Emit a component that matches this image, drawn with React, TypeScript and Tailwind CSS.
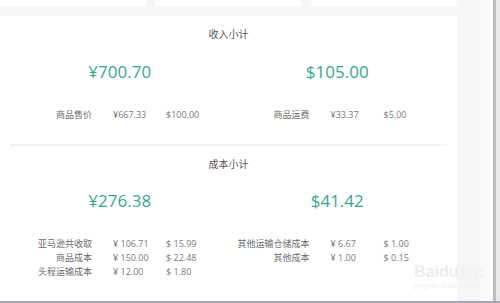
const font = { fontFamily: '"Open Sans", "Noto Sans CJK SC", sans-serif' };

type Row = { label: string; cny: string; usd: string };

function Block({ big, rows }: { big: string; rows: Row[] }) {
    return (
        <div className="flex flex-col">
            <div className="text-center text-[17px] leading-[24px] text-[#36a98d]">{big}</div>
            <div className="mt-[24px] flex flex-col">
                {rows.map(r => (
                    <div key={r.label} className="flex h-[14px] items-center text-[9px] leading-[14px] text-[#6b6b6b]">
                        <div className="w-[81px] text-right whitespace-nowrap">{r.label}</div>
                        <div className="ml-[21px] w-[53px] whitespace-nowrap text-[#7a7a7a]">{r.cny}</div>
                        <div className="whitespace-nowrap text-[#7a7a7a]">{r.usd}</div>
                    </div>
                ))}
            </div>
        </div>
    );
}

export default function App() {
    return (
        <div className="relative flex h-[303px] w-[500px] overflow-hidden bg-[#f6f6f6]" style={font}>
            <div className="flex w-[457px] flex-col">
                {/* top cards, cut off */}
                <div className="flex h-[6px] gap-[9px]">
                    <div className="w-[146px] bg-white" />
                    <div className="w-[147px] bg-white" />
                    <div className="flex-1 bg-white" />
                </div>
                <div className="mt-[10px] flex-1 bg-white px-[11px]">
                    <div className="mt-[11px] text-center text-[10px] leading-[14px] text-[#555]">收入小计</div>
                    <div className="mt-[19px] grid grid-cols-2">
                        <Block big="¥700.70" rows={[{ label: '商品售价', cny: '¥667.33', usd: '$100.00' }]} />
                        <Block big="$105.00" rows={[{ label: '商品运费', cny: '¥33.37', usd: '$5.00' }]} />
                    </div>
                    <div className="mx-[-1px] mt-[22px] h-[2px] bg-[#f3f3f3]" />
                    <div className="mt-[11px] text-center text-[10px] leading-[14px] text-[#555]">成本小计</div>
                    <div className="mt-[18px] grid grid-cols-2">
                        <Block
                            big="¥276.38"
                            rows={[
                                { label: '亚马逊共收取', cny: '¥ 106.71', usd: '$ 15.99' },
                                { label: '商品成本', cny: '¥ 150.00', usd: '$ 22.48' },
                                { label: '头程运输成本', cny: '¥ 12.00', usd: '$ 1.80' },
                            ]}
                        />
                        <Block
                            big="$41.42"
                            rows={[
                                { label: '其他运输仓储成本', cny: '¥ 6.67', usd: '$ 1.00' },
                                { label: '其他成本', cny: '¥ 1.00', usd: '$ 0.15' },
                            ]}
                        />
                    </div>
                </div>
            </div>
            <div className="w-[23px] bg-[#f6f6f6]" />
            <div className="w-[13px] bg-[#fafafa]" />
            {/* scrollbar */}
            <div className="flex w-[7px]">
                <div className="w-[3px] bg-[#bdbdbd]" />
                <div className="flex-1 bg-[#e9e9e9]" />
            </div>

            {/* watermark */}
            <div className="pointer-events-none absolute left-[414px] top-[264px] flex flex-col">
                <div className="flex items-end gap-[2px]">
                    <span className="text-[16px] font-bold leading-[16px] text-[#ededed]" style={{ fontFamily: '"Liberation Sans", sans-serif' }}>Baidu</span>
                    <span className="text-[12px] leading-[14px] text-[#eeeeee]" style={{ fontFamily: '"Noto Sans CJK SC", sans-serif' }}>经验</span>
                </div>
                <div className="mt-[1px] text-[8px] leading-[10px] text-[#efefef]" style={{ fontFamily: '"Liberation Sans", sans-serif' }}>jingyan.baidu.com</div>
            </div>

            <div className="absolute bottom-0 left-0 h-[2px] w-full bg-[#a9a4ad]" />
        </div>
    );
}
